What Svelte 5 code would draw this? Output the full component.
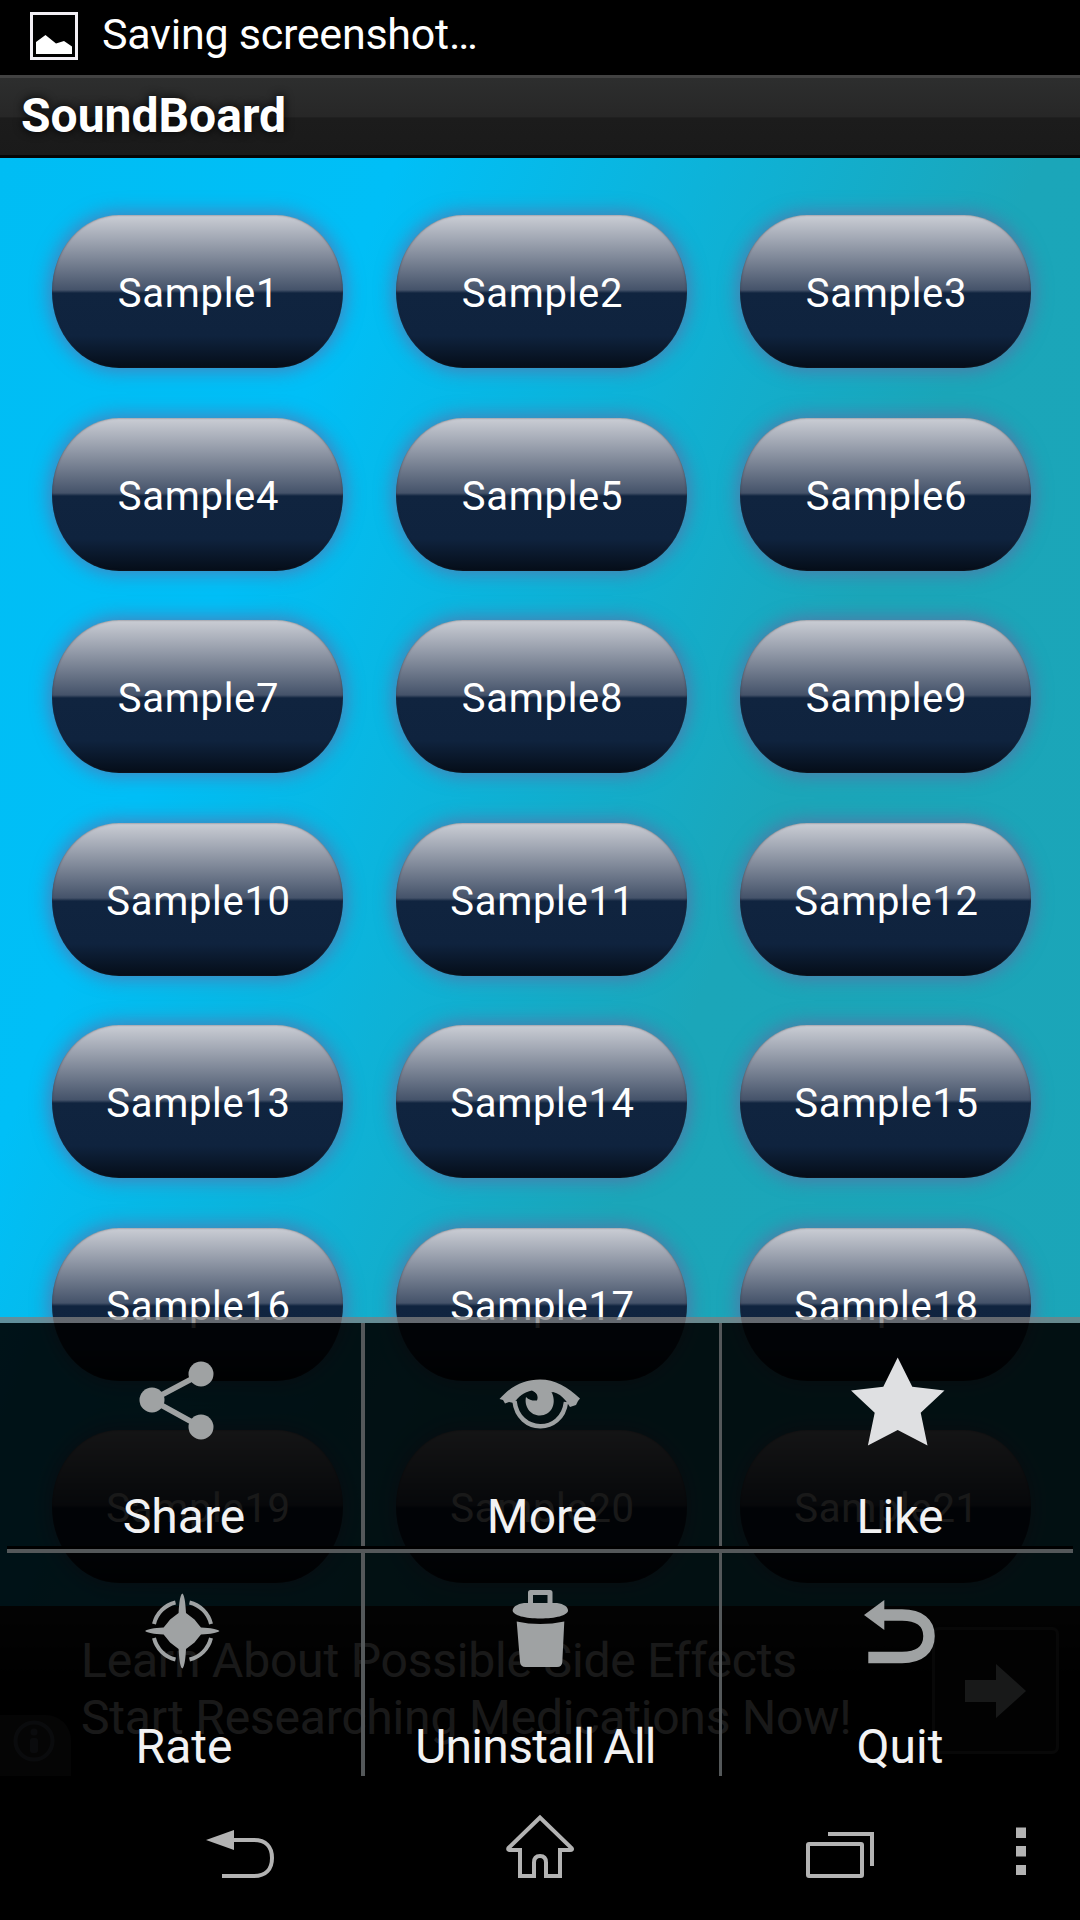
<script lang="ts">
	const samples = Array.from({ length: 21 }, (_, i) => `Sample${i + 1}`);

	const menu = [
		{ id: 'share', label: 'Share' },
		{ id: 'more', label: 'More' },
		{ id: 'like', label: 'Like' },
		{ id: 'rate', label: 'Rate' },
		{ id: 'uninstall', label: 'Uninstall All' },
		{ id: 'quit', label: 'Quit' }
	];
</script>

<div class="screen">
	<header class="status">
		<svg class="status-icon" viewBox="0 0 50 50" aria-hidden="true">
			<rect x="2.5" y="2.5" width="45" height="45" fill="none" stroke="#f2eff5" stroke-width="3" />
			<path d="M7 43V31L16.500 24L27 32.500L35 30L43 35.500V43Z" fill="#fff" />
		</svg>
		<span class="status-text">Saving screenshot…</span>
	</header>

	<div class="titlebar"><h1>SoundBoard</h1></div>

	<main class="board">
		<div class="pads">
			{#each samples as sample}
				<button class="pad">{sample}</button>
			{/each}
		</div>

		<aside class="ad">
			<p>Learn About Possible Side Effects<br />Start Researching Medications Now!</p>
			<div class="ad-go">
				<svg viewBox="0 0 61 54" width="61" height="54" aria-hidden="true">
					<path d="M0 16H31V0L61 27L31 54V38H0Z" fill="#f0fbff" />
				</svg>
			</div>
			<div class="ad-info">
				<svg viewBox="0 0 42 42" width="42" height="42" aria-hidden="true">
					<circle cx="21" cy="21" r="18.500" fill="none" stroke="#6b7280" stroke-width="4" />
					<circle cx="21" cy="12" r="3.500" fill="#6b7280" />
					<rect x="17" y="18" width="8" height="15" rx="3" fill="#6b7280" />
				</svg>
			</div>
		</aside>

		<nav class="menu">
			{#each menu as item}
				<div class="item">
					<svg class="icon" viewBox="0 0 120 120" aria-hidden="true">
						{#if item.id === 'share'}
							<path d="M77 31L28 57L77 84" fill="none" stroke="#9fa2a3" stroke-width="5.500" />
							<circle cx="77" cy="31" r="12.500" />
							<circle cx="28" cy="57" r="12.500" />
							<circle cx="77" cy="84" r="12.500" />
						{:else if item.id === 'more'}
							<path d="M17.500 56C30 42 43 36.500 58 36.500C73 36.500 86 44 98 55.500L96 58L94 62L88 64L84 58C80 53 76 50 71 49L66 51H56L50 47.500C42 49 36 54 32 60L27 59L23 60.500L21 57Z" />
							<path d="M32.500 58C36 91 80 92 84 59" fill="none" stroke="#9fa2a3" stroke-width="4.500" />
							<path d="M44 54C47 57 51 58 55 57.500C57 53 54 49 50 47L60 43L70 50C75 61 69 72.500 58 72.500C48 72.500 42 63 44 54Z" />
						{:else if item.id === 'like'}
							<path
								d="M59.700 14.500L74.300 43.700L106.500 47.500L82.700 69.700L89.500 102.500L59.700 87L29.900 102.500L36.700 69.700L13 47.500L45.300 43.700Z"
								fill="#dfe0e2"
							/>
						{:else if item.id === 'rate'}
							<path d="M58.300 20.500C60.500 22 61.500 30 62 40Q66 43 70.500 46.500Q74 51 77 54.500C87 55 93 56 95.500 58C93 60 87 61 77 61.500Q74 65 70.500 69.500Q66 73 62 76C61.500 86 60.500 94 58.300 95.500C56.100 94 55.100 86 54.600 76Q50.600 73 46.100 69.500Q42.600 65 39.600 61.500C29.600 61 23.600 60 21.100 58C23.600 56 29.600 55 39.600 54.500Q42.600 51 46.100 46.500Q50.600 43 54.600 40C55.100 30 56.100 22 58.300 20.500Z" />
							<path
								d="M65.500 29.500A29 29 0 0 1 87 51M87 65A29 29 0 0 1 65.500 86.500M51.500 86.500A29 29 0 0 1 30 65M30 51A29 29 0 0 1 51.500 29.500"
								fill="none"
								stroke="#9fa2a3"
								stroke-width="4"
							/>
						{:else if item.id === 'uninstall'}
							<path d="M48.500 32V19.500H68V32" fill="none" stroke="#9fa2a3" stroke-width="5" stroke-linejoin="round" />
							<path d="M42 30H75C82 31 86 34 86 37.500C86 42.500 73 45.500 58.300 45.500S30.700 42.500 30.700 37.500C30.700 34 35 31 42 30Z" />
							<path d="M34.700 48.500Q58 53.500 82.300 48.500L80.300 89Q80 94 75 94H43.500Q38.500 94 38 89Z" />
						{:else}
							<path d="M26 42L46.300 27V57Z" />
							<path d="M44 42H64C82 42 91 50 91 63C91 76 82 84.500 64 84.500H30.300" fill="none" stroke="#9fa2a3" stroke-width="11.500" />
						{/if}
					</svg>
					<span class="label" class:wide={item.id === 'uninstall'}>{item.label}</span>
				</div>
			{/each}
		</nav>
	</main>

	<footer class="navbar">
		<svg viewBox="0 0 72 144" width="72" height="144" aria-hidden="true">
			<path class="solid" d="M2 64L30 54V74Z" />
			<path d="M29 64H50C62 64 68 71 68 82S62 100 50 100H18" />
		</svg>
		<svg viewBox="0 0 72 144" width="72" height="144" aria-hidden="true">
			<path d="M36 41.500L4.500 72Q3.500 74 6 74H16V100H30V86.500Q30 80 36 80T42 86.500V100H56V74H66Q69 74 67.500 72Z" />
		</svg>
		<svg viewBox="0 0 72 144" width="72" height="144" aria-hidden="true">
			<rect x="4" y="68" width="54" height="32" rx="1" />
			<path d="M24 58H68V90" />
		</svg>
		<svg class="dots" viewBox="0 0 14 144" width="14" height="144" aria-hidden="true">
			<path class="solid" d="M2 51.500h10v10.500h-10zM2 70h10v10.500h-10zM2 89h10v10h-10z" />
		</svg>
	</footer>
</div>

<style>
	:global(body) {
		margin: 0;
		background: #000;
	}

	.screen {
		width: 1080px;
		height: 1920px;
		overflow: hidden;
		display: flex;
		flex-direction: column;
		background: #000;
		font-family: Roboto, 'Noto Sans', sans-serif;
		color: #fff;
	}

	.status {
		height: 75px;
		box-sizing: border-box;
		padding: 0 0 4px 29px;
		display: flex;
		align-items: center;
		gap: 23px;
	}

	.status-icon {
		width: 50px;
		height: 50px;
	}

	.status-text {
		margin-top: -3px;
		font-size: 43px;
		line-height: 60px;
		letter-spacing: -0.25px;
	}

	.titlebar {
		height: 83px;
		box-sizing: border-box;
		padding-left: 21px;
		border-top: 3px solid #424242;
		border-bottom: 3px solid #050505;
		background: linear-gradient(#2d2e2e, #272727 50%, #1c1c1c 52%, #1a1a1a);
	}

	h1 {
		margin: 0;
		font-size: 48px;
		line-height: 76px;
		font-weight: 700;
		text-shadow: 0 0 10px #000;
	}

	.board {
		position: relative;
		height: 1618px;
		display: flex;
		flex-direction: column;
		background: linear-gradient(112deg, #00bdf4, #00bff7 23%, #1ba6b9 60%, #1ba5b8);
	}

	.pads {
		height: 1448px;
		box-sizing: border-box;
		padding: 57px 49px 0 52px;
		display: grid;
		grid-template-columns: repeat(3, 291px);
		grid-auto-rows: 153px;
		gap: 49.5px 53px;
		align-content: start;
		overflow: hidden;
	}

	.pad {
		padding: 4px 0 0 2px;
		border: 0;
		border-radius: 67px / 76px;
		background: linear-gradient(#cbced5, #a3a9b5 15%, #45536a 49%, #10243f 51%, #0f233e 79%, #050d18 100%);
		box-shadow: 0 0 18px 3px rgba(107, 98, 160, 0.65), inset 0 0 2px rgba(50, 40, 50, 0.7);
		color: #fff;
		font-family: inherit;
		font-size: 40px;
		letter-spacing: 0.7px;
	}

	.ad {
		position: relative;
		height: 170px;
		box-sizing: border-box;
		padding: 21px 21px 0 81px;
		display: flex;
		justify-content: space-between;
		background: linear-gradient(#262626, #000 50%);
	}

	.ad p {
		margin: 5px 0 0;
		font-size: 48px;
		line-height: 57px;
		letter-spacing: -0.18px;
		white-space: nowrap;
	}

	.ad-go {
		width: 127px;
		height: 127px;
		box-sizing: border-box;
		border: 3px solid #555;
		border-radius: 7px;
		display: flex;
		align-items: center;
		justify-content: center;
		background: #1c1c1c;
	}

	.ad-info {
		position: absolute;
		left: 0;
		bottom: 0;
		width: 71px;
		height: 61px;
		padding: 5px 0 0 13px;
		box-sizing: border-box;
		border-radius: 0 25px 0 0;
		background: #333;
	}

	/* options menu slides over the lower part of the board */
	.menu {
		position: absolute;
		left: 0;
		right: 0;
		bottom: 0;
		height: 459px;
		box-sizing: border-box;
		padding: 0 7px;
		border-top: 6px solid rgba(128, 128, 128, 0.75);
		background: rgba(0, 0, 0, 0.9);
		background-clip: padding-box;
		display: grid;
		grid-template-columns: 358px 357px 351px;
		grid-template-rows: 230px 223px;
	}

	.item {
		display: flex;
		flex-direction: column;
		align-items: center;
		box-sizing: border-box;
		padding-top: 20px;
		border-right: 4px solid #54585a;
	}

	.item:nth-child(3n + 2) {
		border-right-width: 3px;
	}

	.item:nth-child(3n) {
		border-right: 0;
	}

	.item:nth-child(-n + 3) {
		height: 223px;
		box-shadow: 0 3px #000, 0 7px #54585a;
	}

	.icon {
		width: 120px;
		height: 120px;
		fill: #9fa2a3;
	}

	.label {
		margin-top: 26px;
		font-size: 48px;
		line-height: 56px;
		color: #f2f2f3;
	}

	.item:nth-child(3n) .label {
		padding-left: 5px;
	}

	.label.wide {
		margin-right: 13px;
		letter-spacing: -0.7px;
		word-spacing: -2.5px;
	}

	.navbar {
		height: 144px;
		padding-left: 204px;
		display: flex;
		gap: 228px;
	}

	.navbar svg {
		flex: none;
		fill: none;
		stroke: #b3b3b3;
		stroke-width: 4;
	}

	.navbar .dots {
		margin-left: -90px;
	}

	.navbar .solid {
		fill: #b3b3b3;
		stroke: none;
	}
</style>
